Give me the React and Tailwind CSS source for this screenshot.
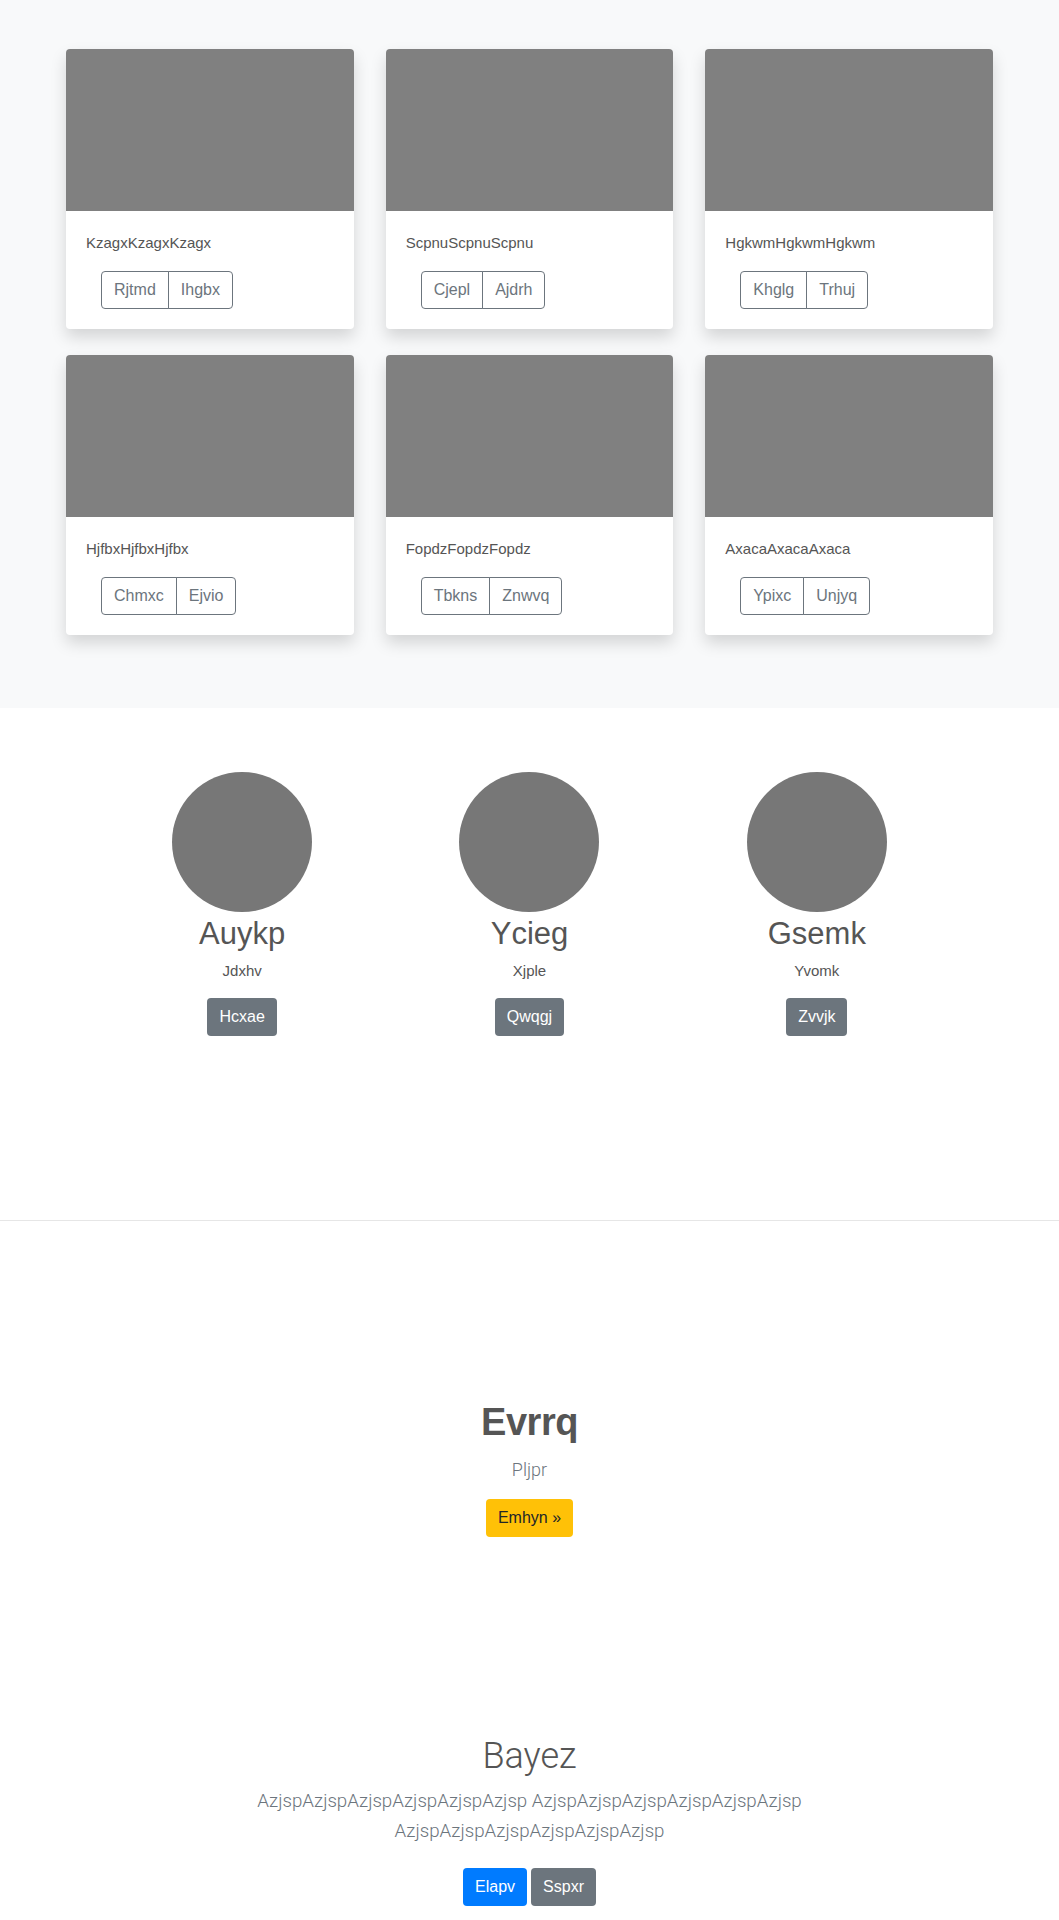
import React from "react";

const cards = [
  { title: "KzagxKzagxKzagx", a: "Rjtmd", b: "Ihgbx" },
  { title: "ScpnuScpnuScpnu", a: "Cjepl", b: "Ajdrh" },
  { title: "HgkwmHgkwmHgkwm", a: "Khglg", b: "Trhuj" },
  { title: "HjfbxHjfbxHjfbx", a: "Chmxc", b: "Ejvio" },
  { title: "FopdzFopdzFopdz", a: "Tbkns", b: "Znwvq" },
  { title: "AxacaAxacaAxaca", a: "Ypixc", b: "Unjyq" },
];

const people = [
  { name: "Auykp", sub: "Jdxhv", btn: "Hcxae" },
  { name: "Ycieg", sub: "Xjple", btn: "Qwqgj" },
  { name: "Gsemk", sub: "Yvomk", btn: "Zvvjk" },
];

function Card({ title, a, b }) {
  return (
    <div className="bg-white rounded-[4px] overflow-hidden shadow-[0_8px_16px_rgba(0,0,0,0.15)]">
      <div className="h-[162px] bg-[#808080]" />
      <div className="px-5 pt-5 pb-5">
        <p className="text-[15px] leading-[24px] text-[#555] mb-4">{title}</p>
        <div className="ml-[15px] flex">
          <button className="h-[38px] px-3 text-[16px] text-[#6c757d] border border-[#6c757d] rounded-l-[4px]">
            {a}
          </button>
          <button className="h-[38px] px-3 text-[16px] text-[#6c757d] border border-[#6c757d] -ml-px rounded-r-[4px]">
            {b}
          </button>
        </div>
      </div>
    </div>
  );
}

export default function App() {
  return (
    <div
      className="w-[1059px] bg-white text-[#555]"
      style={{ fontFamily: '"Liberation Sans", Arial, sans-serif' }}
    >
      <section className="bg-[#f8f9fa] pt-[49px] pb-[73px]">
        <div className="w-[927px] mx-auto grid grid-cols-3 gap-x-[32px] gap-y-[26px]">
          {cards.map((c) => (
            <Card key={c.title} {...c} />
          ))}
        </div>
      </section>

      <section className="pt-[64px] pb-[184px]">
        <div className="w-[862px] mx-auto grid grid-cols-3">
          {people.map((p) => (
            <div key={p.name} className="flex flex-col items-center">
              <div className="w-[140px] h-[140px] rounded-full bg-[#777]" />
              <h2 className="mt-[3px] text-[31px] leading-[37px] text-[#555]">{p.name}</h2>
              <p className="mt-[8px] text-[15px] leading-[22px] text-[#555]">{p.sub}</p>
              <button className="mt-[16px] h-[38px] px-3 text-[16px] text-white bg-[#6c757d] rounded-[4px]">
                {p.btn}
              </button>
            </div>
          ))}
        </div>
      </section>

      <hr className="border-0 border-t border-[#e6e6e6]" />

      <section className="pt-[178px] flex flex-col items-center">
        <h1 className="text-[38px] leading-[46px] font-bold tracking-[-0.5px] text-[#555]">Evrrq</h1>
        <p
          className="mt-[11px] text-[18px] leading-[28px] font-light text-[#6c757d]"
          style={{ fontFamily: "Roboto, sans-serif" }}
        >
          Pljpr
        </p>
        <button className="mt-[15px] h-[38px] px-3 text-[16px] text-[#212529] bg-[#ffc107] rounded-[4px]">
          Emhyn »
        </button>
      </section>

      <section className="pt-[198px] pb-[14px] flex flex-col items-center">
        <h2
          className="text-[36px] leading-[43px] font-light text-[#555]"
          style={{ fontFamily: "Roboto, sans-serif" }}
        >
          Bayez
        </h2>
        <p
          className="mt-[8px] max-w-[640px] text-center text-[18.7px] leading-[30px] font-light text-[#6c757d]"
          style={{ fontFamily: "Roboto, sans-serif" }}
        >
          AzjspAzjspAzjspAzjspAzjspAzjsp AzjspAzjspAzjspAzjspAzjspAzjsp AzjspAzjspAzjspAzjspAzjspAzjsp
        </p>
        <div className="mt-[22px] flex gap-[4px]">
          <button className="h-[38px] px-3 text-[16px] text-white bg-[#007bff] rounded-[4px]">Elapv</button>
          <button className="h-[38px] px-3 text-[16px] text-white bg-[#6c757d] rounded-[4px]">Sspxr</button>
        </div>
      </section>
    </div>
  );
}
